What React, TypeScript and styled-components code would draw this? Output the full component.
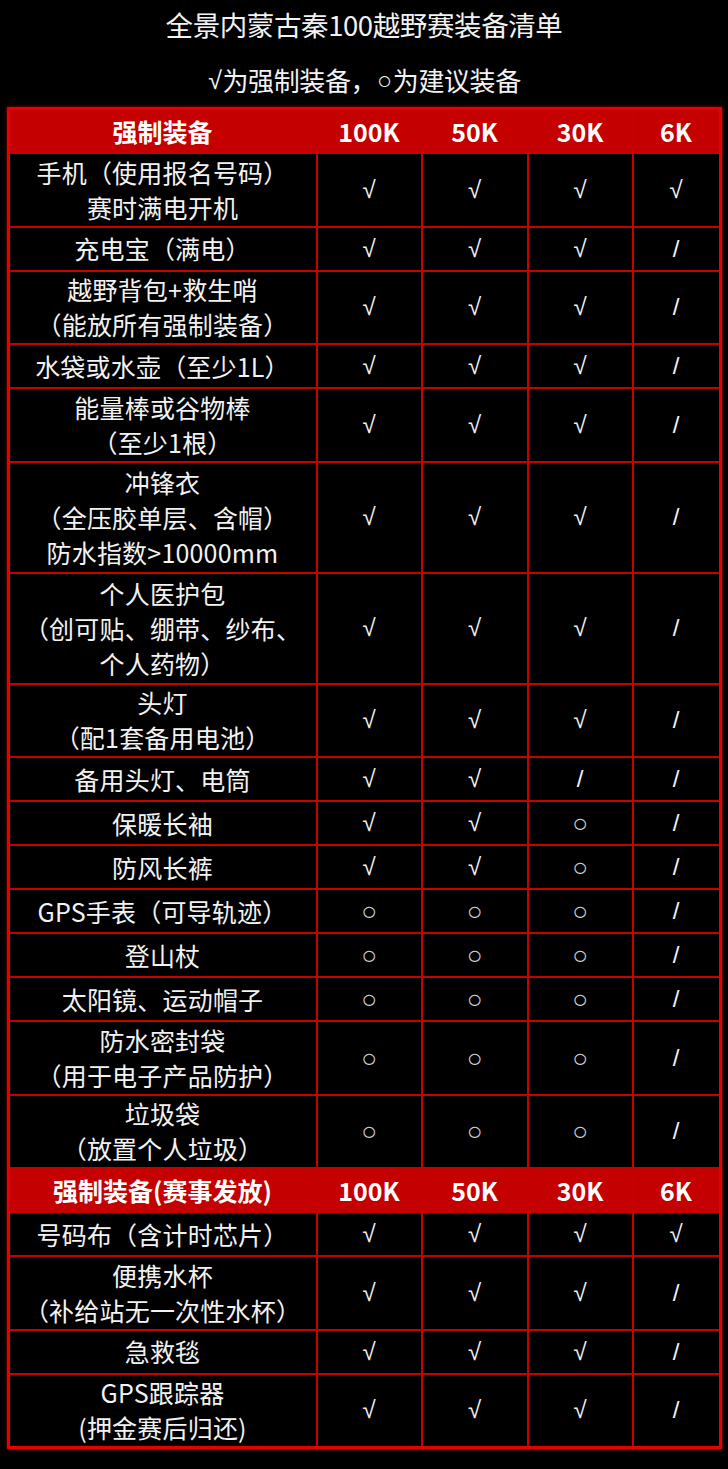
import React from "react";
import styled, { createGlobalStyle } from "styled-components";

// 装备清单 —— 黑底红线表格

const GlobalStyle = createGlobalStyle`
  html, body {
    margin: 0;
    padding: 0;
    background: #000;
  }
  body {
    font-family: "Noto Sans CJK SC", "Noto Sans", sans-serif;
    color: #f2f2f2;
  }
`;

const Page = styled.div`
  width: 728px;
  min-height: 1469px;
  box-sizing: border-box;
  padding-top: 7px;
  background: #000;
  display: flex;
  flex-direction: column;
  align-items: center;
`;

const Title = styled.h1`
  margin: 0;
  font-size: 27.5px;
  font-weight: 400;
  line-height: 34px;
  letter-spacing: -0.4px;
`;

const Subtitle = styled.h2`
  margin: 21px 0 0;
  height: 36px;
  display: flex;
  align-items: center;
  font-size: 26px;
  font-weight: 400;
  line-height: 36px;
  letter-spacing: -0.4px;
`;

const Grid = styled.div`
  margin-top: 9px;
  width: 715px;
  box-sizing: border-box;
  border: 3px solid #e60000;
  background: #c80000;
  display: grid;
  grid-template-columns: 306px 103px 104px 103px 85px;
  gap: 2px;
  box-shadow: 0 0 3px rgba(255, 0, 0, 0.7);
`;

const heights: Record<number, string> = { 1: "42px", 2: "71.5px", 3: "109px" };

const Cell = styled.div<{ $lines: number }>`
  height: ${(p) => heights[p.$lines]};
  background: #000;
  display: flex;
  align-items: center;
  justify-content: center;
  text-align: center;
`;

const HeadCell = styled.div`
  height: 42px;
  background: #c40000;
  display: flex;
  align-items: center;
  justify-content: center;
  font-size: 25px;
  font-weight: 700;
  color: #fff;
`;

const Name = styled.div`
  font-size: 25px;
  line-height: 35px;
  letter-spacing: 0.2px;
`;

const Mark = styled.span<{ $kind: string }>`
  font-family: "Liberation Sans", sans-serif;
  font-size: ${(p) => (p.$kind === "o" ? "26px" : "24px")};
  font-weight: 400;
  color: ${(p) => (p.$kind === "o" ? "#d0d0d0" : "#f2f2f2")};
  line-height: 1;
`;

const Symbol = styled.span<{ $small?: boolean }>`
  font-family: "Liberation Sans", sans-serif;
  font-size: ${(p) => (p.$small ? "25px" : "25px")};
  line-height: 1;
  margin: 0 1px;
`;

type Row = { name: string[]; marks: string };

const required: Row[] = [
  { name: ["手机（使用报名号码）", "赛时满电开机"], marks: "vvvv" },
  { name: ["充电宝（满电）"], marks: "vvv/" },
  { name: ["越野背包+救生哨", "（能放所有强制装备）"], marks: "vvv/" },
  { name: ["水袋或水壶（至少1L）"], marks: "vvv/" },
  { name: ["能量棒或谷物棒", "（至少1根）"], marks: "vvv/" },
  { name: ["冲锋衣", "（全压胶单层、含帽）", "防水指数>10000mm"], marks: "vvv/" },
  { name: ["个人医护包", "（创可贴、绷带、纱布、", "个人药物）"], marks: "vvv/" },
  { name: ["头灯", "（配1套备用电池）"], marks: "vvv/" },
  { name: ["备用头灯、电筒"], marks: "vv//" },
  { name: ["保暖长袖"], marks: "vvo/" },
  { name: ["防风长裤"], marks: "vvo/" },
  { name: ["GPS手表（可导轨迹）"], marks: "ooo/" },
  { name: ["登山杖"], marks: "ooo/" },
  { name: ["太阳镜、运动帽子"], marks: "ooo/" },
  { name: ["防水密封袋", "（用于电子产品防护）"], marks: "ooo/" },
  { name: ["垃圾袋", "（放置个人垃圾）"], marks: "ooo/" },
];

const issued: Row[] = [
  { name: ["号码布（含计时芯片）"], marks: "vvvv" },
  { name: ["便携水杯", "（补给站无一次性水杯）"], marks: "vvv/" },
  { name: ["急救毯"], marks: "vvv/" },
  { name: ["GPS跟踪器", "(押金赛后归还)"], marks: "vvv/" },
];

const distances = ["100K", "50K", "30K", "6K"];
const glyph: Record<string, string> = { v: "√", o: "○", "/": "/" };

const Section = ({ title, rows }: { title: string; rows: Row[] }) => (
  <>
    <HeadCell>{title}</HeadCell>
    {distances.map((d) => (
      <HeadCell key={d}>{d}</HeadCell>
    ))}
    {rows.map((r) => (
      <React.Fragment key={r.name[0]}>
        <Cell $lines={r.name.length}>
          <Name>
            {r.name.map((line) => (
              <div key={line}>{line}</div>
            ))}
          </Name>
        </Cell>
        {r.marks.split("").map((m, i) => (
          <Cell key={i} $lines={r.name.length}>
            <Mark $kind={m}>{glyph[m]}</Mark>
          </Cell>
        ))}
      </React.Fragment>
    ))}
  </>
);

export default function App() {
  return (
    <Page>
      <GlobalStyle />
      <Title>全景内蒙古秦100越野赛装备清单</Title>
      <Subtitle>
        <Symbol>√</Symbol>为强制装备，<Symbol $small>○</Symbol>为建议装备
      </Subtitle>
      <Grid>
        <Section title="强制装备" rows={required} />
        <Section title="强制装备(赛事发放)" rows={issued} />
      </Grid>
    </Page>
  );
}
